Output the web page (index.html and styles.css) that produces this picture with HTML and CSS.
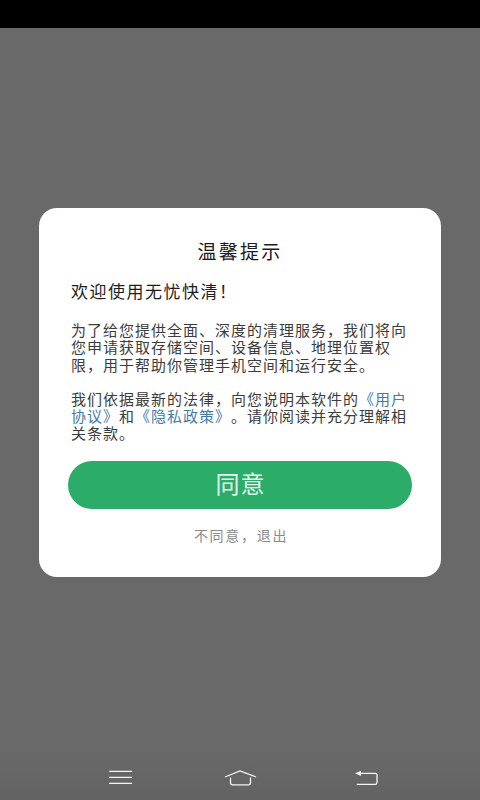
FILE: index.html
```html
<!DOCTYPE html>
<html lang="zh-CN">
<head>
<meta charset="utf-8">
<title>温馨提示</title>
<link rel="stylesheet" href="styles.css">
</head>
<body>
<div class="status"></div>
<main class="stage">
  <section class="card">
    <h1 class="title">温馨提示</h1>
    <h2 class="welcome">欢迎使用无忧快清！</h2>
    <p class="para">为了给您提供全面、深度的清理服务，我们将向您申请获取存储空间、设备信息、地理位置权限，用于帮助你管理手机空间和运行安全。</p>
    <p class="para">我们依据最新的法律，向您说明本软件的<a class="link">《用户协议》</a>和<a class="link">《隐私政策》</a>。请你阅读并充分理解相关条款。</p>
    <button class="agree">同意</button>
    <div class="refuse">不同意，退出</div>
  </section>
</main>
<nav class="navbar">
  <svg class="icon" width="26" height="16" viewBox="0 0 26 16" fill="none" stroke="#f4f4f4" stroke-width="1.3">
    <path d="M2 1.300H25M2 7.300H25M2 13.300H25"/>
  </svg>
  <svg class="icon" width="34" height="18" viewBox="0 0 34 18" fill="none" stroke="#f4f4f4" stroke-width="1.3">
    <path d="M2 7 17 1 33 7"/>
    <path d="M7.500 7.500V12.800Q7.500 14.800 9.500 14.800H25.500Q27.500 14.800 27.500 12.800V7.500"/>
  </svg>
  <svg class="icon icon-back" width="26" height="18" viewBox="0 0 26 18" fill="none" stroke="#f4f4f4" stroke-width="1.3">
    <path d="M4 3.300H21.500Q23 3.300 23 4.800V12.800Q23 14.300 21.500 14.300H2.700"/>
    <path d="M1 3.300 7 0.700V5.900Z" fill="#f4f4f4" stroke="none"/>
  </svg>
</nav>
</body>
</html>
```
FILE: styles.css
```css
* { box-sizing: border-box; }
html, body { margin: 0; padding: 0; }
body {
  width: 480px;
  height: 800px;
  display: flex;
  flex-direction: column;
  background: #696969;
  font-family: "Noto Sans CJK SC", "Liberation Sans", sans-serif;
  overflow: hidden;
  text-spacing-trim: space-all;
  font-kerning: none;
}
.status { height: 28px; background: #000; flex: none; }
.stage { flex: none; height: 724px; padding: 180px 39px 0; }
.card {
  width: 402px;
  height: 369px;
  background: #fff;
  border-radius: 18px;
  padding: 31px 30px 0 32px;
  display: flex;
  flex-direction: column;
}
.title {
  margin: 0 0 0 -2px;
  font-size: 19px;
  font-weight: 400;
  line-height: 24px;
  letter-spacing: 2.3px;
  text-align: center;
  color: #1c1c1c;
}
.welcome {
  margin: 16px 0 0;
  font-size: 17px;
  font-weight: 400;
  line-height: 24px;
  letter-spacing: 1.5px;
  color: #1e1e1e;
}
.para {
  margin: 0;
  font-size: 15px;
  line-height: 17.3px;
  letter-spacing: 1px;
  color: #3c3c3c;
}
.welcome + .para { margin-top: 18px; }
.para + .para { margin-top: 17px; }
.link { color: #3f7cac; }
.agree {
  flex: none;
  align-self: center;
  margin: 19px 0 0 -2px;
  width: 344px;
  height: 48px;
  padding: 0 0 4px;
  border: 0;
  border-radius: 24px;
  background: #2bad69;
  color: #e6f5ec;
  font-family: inherit;
  font-size: 24px;
  letter-spacing: 1px;
  text-indent: 1px;
}
.refuse {
  margin-top: 16px;
  text-align: center;
  font-size: 14px;
  line-height: 20px;
  letter-spacing: 1.7px;
  color: #8a8a8a;
}
.navbar {
  flex: none;
  height: 48px;
  padding: 18px 0 0;
  display: grid;
  grid-template-columns: 120px 120px 120px;
  justify-content: center;
  justify-items: center;
  align-items: start;
  background: linear-gradient(#696969, #636363);
}
.icon-back { margin-left: 14px; }
```
